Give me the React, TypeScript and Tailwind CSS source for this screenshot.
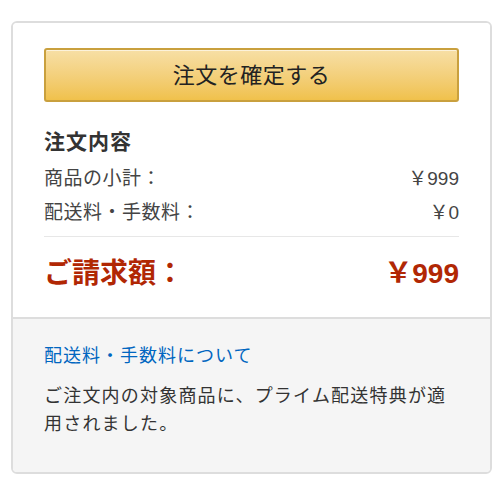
const font = { fontFamily: '"Liberation Sans", "Noto Sans CJK JP", sans-serif' }

function SummaryRow({ label, value }: { label: string; value: string }) {
  return (
    <div className="flex items-center justify-between h-[34px] text-[19px] text-[#444]">
      <span className="tracking-[0.5px]">{label}</span>
      <span>{value}</span>
    </div>
  )
}

export default function App() {
  return (
    <div className="pt-[21px] pl-[11px] pr-[10px] bg-white" style={font}>
      <div className="border-2 border-[#dddddd] rounded-[6px] overflow-hidden">
        <div className="px-[31px] pt-[25px] pb-[23px] bg-white">
          <button className="w-full h-[54px] rounded-[3px] border-2 border-[#c9a03e] bg-gradient-to-b from-[#f7dfa5] to-[#f0c14b] shadow-[inset_0_1px_0_rgba(255,255,255,0.6)] text-[22px] text-[#222] tracking-[0.5px]">
            注文を確定する
          </button>

          <h2 className="mt-[26px] h-[28px] leading-[28px] text-[21px] font-bold text-[#333] tracking-[1px]">
            注文内容
          </h2>
          <div className="mt-[6px]">
            <SummaryRow label="商品の小計：" value="￥999" />
            <SummaryRow label="配送料・手数料：" value="￥0" />
          </div>

          <div className="mt-[6px] h-px bg-[#e7e7e7]" />

          <div className="mt-[17px] flex items-center justify-between h-[40px] text-[28px] font-bold text-[#b12704]">
            <span>ご請求額：</span>
            <span>￥999</span>
          </div>
        </div>

        <div className="border-t-2 border-[#dddddd] bg-[#f5f5f5] px-[31px] pt-[23px] pb-[34px]">
          <a href="#" className="block h-[28px] leading-[28px] text-[18px] tracking-[1px] text-[#0066c0]">
            配送料・手数料について
          </a>
          <p className="mt-[12px] leading-[28px] text-[18px] tracking-[1.2px] text-[#333]">
            ご注文内の対象商品に、プライム配送特典が適用されました。
          </p>
        </div>
      </div>
    </div>
  )
}
